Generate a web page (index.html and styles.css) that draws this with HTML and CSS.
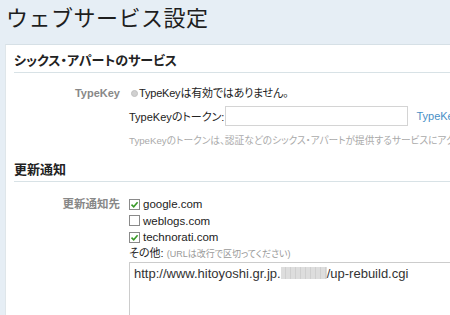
FILE: index.html
```html
<!DOCTYPE html>
<html lang="ja">
  <head>
    <meta charset="UTF-8" />
    <title>ウェブサービス設定</title>
    <link rel="stylesheet" href="styles.css">
  </head>
  <body>
    <h1 class="page-title">ウェブサービス設定</h1>
    <div class="panel">
      <h2 class="section-title">シックス・アパートのサービス</h2>
      <div class="field">
        <div class="field-label">TypeKey</div>
        <div class="field-body">
          <div class="status"><span class="dot"></span>TypeKeyは有効ではありません。</div>
          <div class="token-row">
            <span>TypeKeyのトークン:</span>
            <input type="text" class="token-input" />
            <a class="link" href="#">TypeKey</a>
          </div>
          <p class="hint">TypeKeyのトークンは、認証などのシックス・アパートが提供するサービスにアクセスするために必要です。</p>
        </div>
      </div>

      <h2 class="section-title">更新通知</h2>
      <div class="field field-checks">
        <div class="field-label label-jp">更新通知先</div>
        <div class="field-body">
          <label class="check"><span class="box"><svg viewBox="0 0 9 9" width="9" height="9"><path d="M1.5 4.6 L3.7 6.8 L7.6 2.2" fill="none" stroke="#3a9a2a" stroke-width="1.6"/></svg></span>google.com</label>
          <label class="check"><span class="box"></span>weblogs.com</label>
          <label class="check"><span class="box"><svg viewBox="0 0 9 9" width="9" height="9"><path d="M1.5 4.6 L3.7 6.8 L7.6 2.2" fill="none" stroke="#3a9a2a" stroke-width="1.6"/></svg></span>technorati.com</label>
          <div class="other">その他: <span class="note">(URLは改行で区切ってください)</span></div>
          <div class="urls">http://www.hitoyoshi.gr.jp.<span class="masked"></span>/up-rebuild.cgi</div>
        </div>
      </div>
    </div>
  </body>
</html>
```
FILE: styles.css
```css
body {
  margin: 0;
  background-color: #e6eef5;
  font-family: "Liberation Sans", "Noto Sans CJK JP", sans-serif;
  font-feature-settings: "palt";
  color: #222;
  overflow: hidden;
}

.page-title {
  margin: 0;
  padding: 6px 0 0 6px;
  height: 38px;
  font-size: 22px;
  line-height: 26px;
  font-weight: normal;
  font-feature-settings: normal;
  letter-spacing: 0.5px;
  color: #1e1e1e;
}

.panel {
  margin-left: 5px;
  background-color: #fff;
  border-top: 1px solid #d6e0e6;
  border-left: 1px solid #dfe6ea;
  padding: 8px 0 20px 8px;
  min-height: 300px;
}

.section-title {
  margin: 0;
  padding-bottom: 4px;
  font-size: 13px;
  line-height: 15px;
  font-weight: bold;
  border-bottom: 1px solid #d8e2e6;
}

.field {
  display: flex;
  padding-top: 12px;
}

.field-checks {
  padding-top: 14px;
}

.field-label {
  width: 106px;
  text-align: right;
  padding-right: 9px;
  color: #888;
  font-size: 11px;
  font-weight: bold;
  line-height: 16px;
  flex-shrink: 0;
}

.label-jp {
  font-size: 11.5px;
}

.field-body {
  flex: 1;
  font-size: 11px;
  min-width: 0;
  white-space: nowrap;
}

.status {
  display: flex;
  align-items: center;
  line-height: 16px;
  margin-left: 2px;
  letter-spacing: -0.2px;
}

.dot {
  width: 7px;
  height: 7px;
  border-radius: 50%;
  background-color: #d0d0d0;
  border: 1px solid #c0c0c0;
  margin-right: 1px;
  box-sizing: border-box;
}

.token-row {
  display: flex;
  align-items: center;
  margin-top: 5px;
  height: 20px;
}

.token-input {
  width: 184px;
  height: 20px;
  box-sizing: border-box;
  margin: 0 8px 0 1px;
  border: 1px solid #d4d4d4;
  padding: 2px;
}

.link {
  color: #4a8fc6;
  text-decoration: none;
}

.hint {
  margin: 9px 0 15px;
  font-size: 9.7px;
  line-height: 12px;
  color: #aaa;
}

.check {
  display: flex;
  align-items: center;
  height: 16.5px;
  font-size: 11.5px;
}

.box {
  width: 11px;
  height: 11px;
  box-sizing: border-box;
  border: 1px solid #8a8a8a;
  background-color: #fff;
  margin-right: 3px;
  display: flex;
  align-items: center;
  justify-content: center;
}

.other {
  font-size: 11px;
  line-height: 14px;
}

.note {
  font-size: 9px;
  color: #999;
}

.urls {
  margin-top: 1px;
  height: 51px;
  border: 1px solid #ccc;
  border-right: none;
  padding: 3px 4px;
  font-size: 13px;
  line-height: 15px;
  color: #333;
}

.masked {
  display: inline-block;
  width: 46px;
  height: 12px;
  vertical-align: -1px;
  background: repeating-linear-gradient(90deg, #ddd 0 4px, #cfcfcf 4px 5px);
}
```
